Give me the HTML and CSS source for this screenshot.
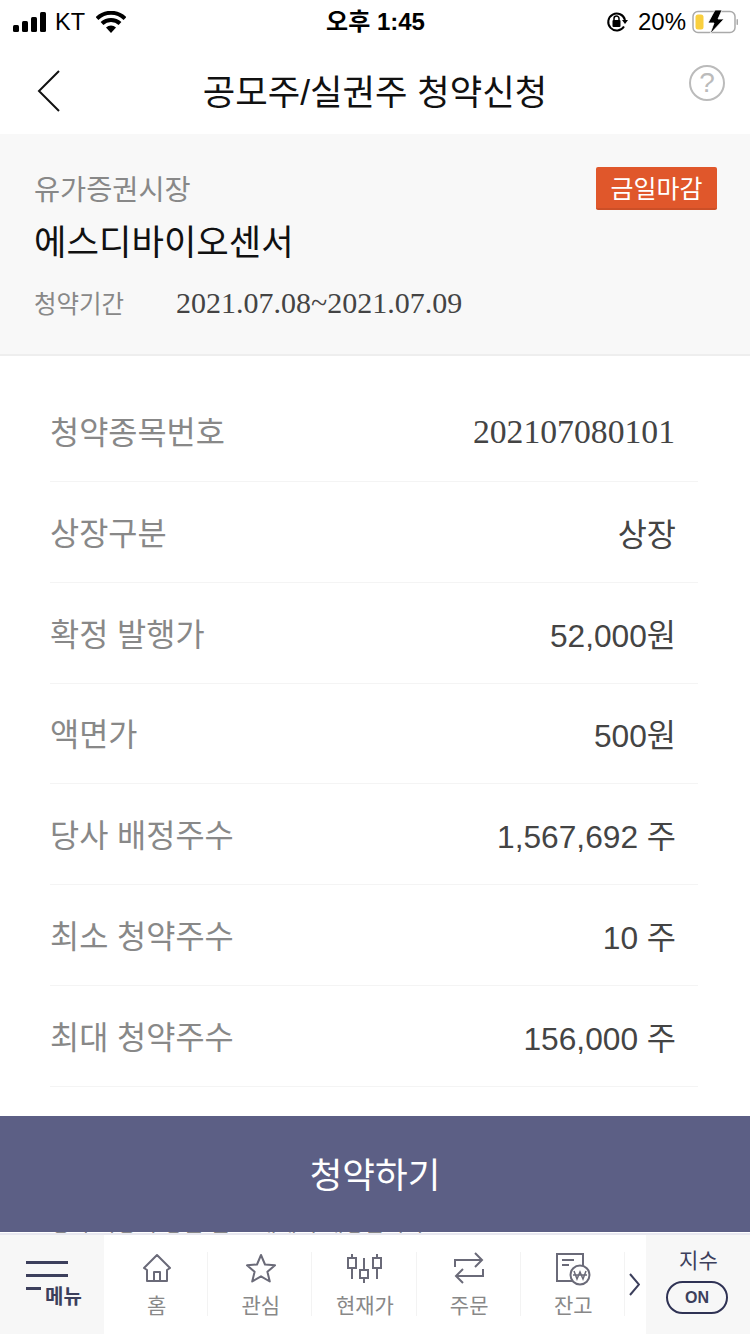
FILE: index.html
```html
<!DOCTYPE html>
<html lang="ko">
<head>
  <meta charset="UTF-8" />
  <title>공모주/실권주 청약신청</title>
  <link rel="stylesheet" href="styles.css">
</head>
<body>
  <div class="page">
    <div class="status-bar">
      <div class="status-left">
        <svg class="signal" width="34" height="20" viewBox="0 0 34 20"><rect x="0" y="13" width="6" height="7" rx="1.5"/><rect x="9" y="9" width="6" height="11" rx="1.5"/><rect x="18" y="5" width="6" height="15" rx="1.5"/><rect x="27" y="0" width="6" height="20" rx="1.5"/></svg>
        <span class="carrier">KT</span>
        <svg class="wifi" width="30" height="22" viewBox="0 0 30 22"><path d="M1 7.5a20 20 0 0 1 28 0M6 12.5a13 13 0 0 1 18 0" fill="none" stroke="#000" stroke-width="4"/><path d="M10 16.5a7.500 7.500 0 0 1 10 0L15 22z"/></svg>
      </div>
      <div class="status-time">오후 1:45</div>
      <div class="status-right">
        <svg width="22" height="22" viewBox="0 0 22 22"><path d="M18 15.500A8.500 8.500 0 1 1 19 9" fill="none" stroke="#000" stroke-width="2"/><path d="M16 9h6l-3 4z"/><rect x="6.500" y="9" width="8" height="7" rx="1"/><path d="M8 9V7.500a2.500 2.500 0 0 1 5 0V9" fill="none" stroke="#000" stroke-width="1.500"/></svg>
        <span class="percent">20%</span>
        <svg width="46" height="24" viewBox="0 0 46 24"><rect x="1" y="1.500" width="42" height="21" rx="5" fill="none" stroke="#aaa" stroke-width="1.500"/><rect x="3.500" y="4.500" width="8" height="15" rx="2.500" fill="#f9cf3e"/><rect x="44.500" y="9" width="1.500" height="6" rx="0.750" fill="#aaa"/><path d="M23 0h7l-4 9h6L18 24l4-11h-6z" stroke="#fff" stroke-width="0.800"/></svg>
      </div>
    </div>

    <div class="nav-bar">
      <svg class="nav-back" width="24" height="42" viewBox="0 0 24 42"><path d="M22 1 2 21l20 20" fill="none" stroke="#111" stroke-width="2"/></svg>
      <h1 class="nav-title">공모주/실권주 청약신청</h1>
      <span class="nav-help">?</span>
    </div>

    <div class="summary">
      <div class="summary-top">
        <span class="market">유가증권시장</span>
        <span class="deadline">금일마감</span>
      </div>
      <div class="stock-name">에스디바이오센서</div>
      <div class="period">
        <span class="period-label">청약기간</span>
        <span class="period-value">2021.07.08~2021.07.09</span>
      </div>
    </div>

    <div class="detail-list">
      <div class="detail-row"><span class="detail-label">청약종목번호</span><span class="detail-value serif">202107080101</span></div>
      <div class="detail-row"><span class="detail-label">상장구분</span><span class="detail-value">상장</span></div>
      <div class="detail-row"><span class="detail-label">확정 발행가</span><span class="detail-value">52,000원</span></div>
      <div class="detail-row"><span class="detail-label">액면가</span><span class="detail-value">500원</span></div>
      <div class="detail-row"><span class="detail-label">당사 배정주수</span><span class="detail-value">1,567,692 주</span></div>
      <div class="detail-row"><span class="detail-label">최소 청약주수</span><span class="detail-value">10 주</span></div>
      <div class="detail-row"><span class="detail-label">최대 청약주수</span><span class="detail-value">156,000 주</span></div>
      <p class="detail-note">청약 가능 수량은 한도 내에서 배정됩니다</p>
      <button class="apply-button">청약하기</button>
    </div>

    <div class="tab-bar">
      <div class="tab-menu">
        <span class="menu-line"></span>
        <span class="menu-line"></span>
        <div class="menu-bottom"><span class="menu-line short"></span><span class="menu-text">메뉴</span></div>
      </div>
      <div class="tab-item">
        <svg width="30" height="32" viewBox="0 0 30 32"><path d="M2 16 15 3l13 13-3 2v11H5V18z M12 29v-9h6v9" fill="none" stroke="#6a6a78" stroke-width="2" stroke-linejoin="round"/></svg>
        <span>홈</span>
      </div>
      <div class="tab-item">
        <svg width="32" height="32" viewBox="0 0 32 32"><path d="m16 3 4 9.500 10 .8-7.600 6.500 2.400 9.700L16 24.300 7.200 29.500l2.400-9.700L2 13.300l10-.8z" fill="none" stroke="#6a6a78" stroke-width="2" stroke-linejoin="round"/></svg>
        <span>관심</span>
      </div>
      <div class="tab-item">
        <svg width="36" height="32" viewBox="0 0 36 32"><path d="M5 2v4M5 16v11M17 6v12M17 26v5M30 2v4M30 16v11" stroke="#6a6a78" stroke-width="2"/><rect x="1" y="6" width="8" height="10" fill="none" stroke="#6a6a78" stroke-width="2"/><rect x="13" y="18" width="8" height="8" fill="none" stroke="#6a6a78" stroke-width="2"/><rect x="26" y="6" width="8" height="10" fill="none" stroke="#6a6a78" stroke-width="2"/></svg>
        <span>현재가</span>
      </div>
      <div class="tab-item">
        <svg width="32" height="32" viewBox="0 0 32 32"><path d="M2 15V8h27M22 1l7 7-7 7M30 17v7H3M10 17l-7 7 7 7" fill="none" stroke="#6a6a78" stroke-width="2"/></svg>
        <span>주문</span>
      </div>
      <div class="tab-item last">
        <svg width="36" height="34" viewBox="0 0 36 34"><path d="M21 29H2V2h26v16" fill="none" stroke="#6a6a78" stroke-width="2"/><path d="M7 8h12M7 13h7" stroke="#6a6a78" stroke-width="2"/><circle cx="25" cy="23" r="9.500" fill="#fff" stroke="#6a6a78" stroke-width="2"/><path d="m19 19 3 8 3-7 3 7 3-8M18 23h14" fill="none" stroke="#6a6a78" stroke-width="1.500"/></svg>
        <span>잔고</span>
      </div>
      <div class="tab-more">
        <svg width="11" height="23" viewBox="0 0 11 23"><path d="m1 1 9 10.500-9 10.500" fill="none" stroke="#3c3f5c" stroke-width="2"/></svg>
      </div>
      <div class="tab-index">
        <span class="index-label">지수</span>
        <span class="index-toggle">ON</span>
      </div>
    </div>
  </div>
</body>
</html>
```
FILE: styles.css
```css
* {
  box-sizing: border-box;
}

body {
  margin: 0;
  background-color: #fff;
  font-family: "Liberation Sans", "Noto Sans CJK KR", sans-serif;
}

.page {
  width: 750px;
  height: 1334px;
  display: flex;
  flex-direction: column;
  overflow: hidden;
}

/* status bar */
.status-bar {
  height: 44px;
  flex: none;
  padding: 0 12px 0 13px;
  display: flex;
  align-items: center;
  color: #000;
}

.status-left,
.status-right {
  flex: 1;
  display: flex;
  align-items: center;
}

.signal {
  margin-right: 8px;
}

.carrier {
  font-size: 23.5px;
  margin-right: 11px;
}

.status-time {
  font-size: 24px;
  font-weight: 700;
  padding-bottom: 6px;
}

.status-right {
  justify-content: flex-end;
  gap: 9px;
}

.percent {
  font-size: 24px;
  margin-left: 1px;
  margin-right: -3px;
}

/* nav */
.nav-bar {
  height: 90px;
  flex: none;
  display: flex;
  align-items: center;
  justify-content: center;
  position: relative;
}

.nav-back {
  position: absolute;
  left: 37px;
  top: 26px;
}

.nav-title {
  margin: 0;
  font-size: 35.300px;
  font-weight: 400;
  color: #111;
}

.nav-help {
  position: absolute;
  left: 689px;
  top: 21px;
  width: 36px;
  height: 36px;
  border: 2px solid #bbb;
  border-radius: 50%;
  color: #bbb;
  font-size: 28px;
  line-height: 32px;
  text-align: center;
}

/* summary */
.summary {
  height: 222px;
  flex: none;
  padding: 33px 33px 0 34px;
  background-color: #f8f8f8;
  border-bottom: 2px solid #eee;
}

.summary-top {
  display: flex;
  justify-content: space-between;
  align-items: flex-start;
  height: 43px;
}

.market {
  font-size: 28.400px;
  color: #888;
}

.deadline {
  width: 121px;
  height: 43px;
  padding-top: 3px;
  background-color: #e0572b;
  border-bottom: 2px solid #cc4f27;
  border-radius: 2px;
  color: #fff;
  font-size: 25px;
  line-height: 38px;
  text-align: center;
}

.stock-name {
  margin-top: 8px;
  font-size: 35.300px;
  line-height: 50px;
  color: #111;
}

.period {
  display: flex;
  align-items: center;
  margin-top: 17px;
}

.period-label {
  width: 142px;
  font-size: 24.500px;
  color: #888;
}

.period-value {
  font-family: "Liberation Serif", serif;
  font-size: 30px;
  color: #444;
}

/* detail rows */
.detail-list {
  flex: 1;
  min-height: 0;
  padding: 25px 52px 0 50px;
  overflow: hidden;
  position: relative;
}

.detail-row {
  height: 100.850px;
  display: flex;
  align-items: center;
  justify-content: space-between;
  padding-right: 22px;
  border-bottom: 1px solid #f4f4f4;
}

.detail-label {
  font-size: 31.700px;
  color: #888;
  margin-top: -2px;
}

.detail-value {
  font-size: 31.700px;
  color: #444;
}

.detail-value.serif {
  font-family: "Liberation Serif", serif;
  font-size: 33.700px;
  margin: 2px 1px 0 0;
}

.detail-note {
  margin: 122px 0 0;
  font-size: 22px;
  line-height: 30px;
  color: #888;
  white-space: nowrap;
}

.apply-button {
  position: absolute;
  left: 0;
  bottom: 1px;
  width: 750px;
  height: 116px;
  padding-bottom: 4px;
  border: none;
  background-color: #5c5f85;
  color: #fff;
  font-family: inherit;
  font-size: 35.500px;
}

/* tab bar */
.tab-bar {
  height: 101px;
  flex: none;
  display: flex;
  background-color: #fff;
  border-top: 2px solid #e8e8f0;
}

.tab-menu {
  width: 104px;
  flex: none;
  padding: 26px 0 0 26px;
  background-color: #f7f7f7;
}

.menu-line {
  display: block;
  width: 42px;
  height: 3px;
  margin-bottom: 10px;
  background-color: #3c3f5c;
}

.menu-bottom {
  display: flex;
  align-items: flex-start;
}

.menu-line.short {
  width: 15px;
  margin: 0;
  flex: none;
}

.menu-text {
  margin-left: 4px;
  font-size: 20px;
  font-weight: 700;
  line-height: 20px;
  color: #3c3f5c;
}

.tab-item {
  width: 104.200px;
  margin-top: 17px;
  padding-left: 2px;
  height: 64px;
  flex: none;
  display: flex;
  flex-direction: column;
  align-items: center;
  border-right: 1px solid #f3f3f3;
  font-size: 21px;
  color: #888;
}

.tab-item svg {
  flex: none;
}

.tab-item span {
  line-height: 26px;
  margin-top: 9px;
}

.tab-item.last span {
  margin-top: 7px;
}

.tab-more {
  width: 21px;
  flex: none;
  padding: 38px 0 0 4px;
}

.tab-index {
  width: 104px;
  flex: none;
  background-color: #f7f7f7;
  display: flex;
  flex-direction: column;
  align-items: center;
  padding: 14px 0 0 1px;
  color: #3c3f5c;
}

.index-label {
  font-size: 21px;
  line-height: 24px;
}

.index-toggle {
  margin: 8px 3px 0 0;
  width: 62px;
  height: 33px;
  border: 2px solid #2f3254;
  border-radius: 17px;
  font-size: 16px;
  font-weight: 700;
  line-height: 29px;
  text-align: center;
}
```
